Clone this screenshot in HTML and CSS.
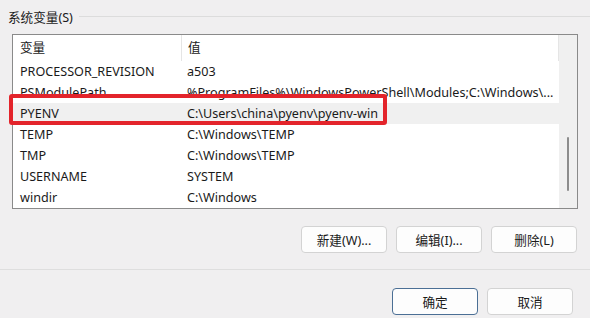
FILE: index.html
```html
<!DOCTYPE html>
<html lang="zh-CN">
<head>
    <meta charset="UTF-8">
    <title>系统变量</title>
    <link rel="stylesheet" href="styles.css">
</head>
<body>
    <div class="group-title">
        <span>系统变量(S)</span>
        <div class="group-line"></div>
    </div>

    <div class="panel">
        <div class="listbox">
            <div class="rows">
                <div class="row header">
                    <div class="col-name">变量</div>
                    <div class="col-value">值</div>
                </div>
                <div class="row">
                    <div class="col-name">PROCESSOR_REVISION</div>
                    <div class="col-value">a503</div>
                </div>
                <div class="row">
                    <div class="col-name">PSModulePath</div>
                    <div class="col-value">%ProgramFiles%\WindowsPowerShell\Modules;C:\Windows\...</div>
                </div>
                <div class="row selected">
                    <div class="col-name">PYENV</div>
                    <div class="col-value">C:\Users\china\pyenv\pyenv-win</div>
                </div>
                <div class="row">
                    <div class="col-name">TEMP</div>
                    <div class="col-value">C:\Windows\TEMP</div>
                </div>
                <div class="row">
                    <div class="col-name">TMP</div>
                    <div class="col-value">C:\Windows\TEMP</div>
                </div>
                <div class="row">
                    <div class="col-name">USERNAME</div>
                    <div class="col-value">SYSTEM</div>
                </div>
                <div class="row">
                    <div class="col-name">windir</div>
                    <div class="col-value">C:\Windows</div>
                </div>
            </div>
            <div class="scrollbar">
                <div class="thumb"></div>
            </div>
        </div>
        <!-- annotation box around the PYENV row -->
        <div class="highlight"></div>
    </div>

    <div class="actions">
        <button class="btn">新建(W)...</button>
        <button class="btn">编辑(I)...</button>
        <button class="btn">删除(L)</button>
    </div>

    <div class="separator"></div>

    <div class="footer">
        <button class="btn default">确定</button>
        <button class="btn">取消</button>
    </div>
</body>
</html>
```

FILE: styles.css
```css
body {
    margin: 0;
    background-color: #f0eff0;
    font-family: "Noto Sans", "Noto Sans CJK SC", sans-serif;
    font-size: 12.6px;
    color: #1a1a1a;
    width: 590px;
    height: 318px;
    overflow: hidden;
}
.group-title {
    display: flex;
    align-items: center;
    height: 18px;
    padding: 7px 0 0 8px;
}
.group-line {
    flex: 1;
    height: 1px;
    background-color: #dcdcdc;
    margin-left: 6px;
}
.panel {
    position: relative;
    margin: 9px 0 0 12px;
    width: 566px;
}
.listbox {
    display: flex;
    height: 173px;
    border: 1px solid #8a8a8a;
    background: white;
}
.rows {
    flex: 1;
}
.row {
    display: flex;
    height: 21px;
    align-items: center;
}
.row.header {
    height: 26px;
}
.row.header .col-name {
    border-right: 1px solid #e5e5e5;
    height: 26px;
    line-height: 26px;
}
.row.selected {
    background-color: #f0f0f0;
}
.col-name {
    width: 161px;
    padding-left: 7px;
    flex-shrink: 0;
}
.col-value {
    padding-left: 6px;
    white-space: nowrap;
    overflow: hidden;
}
.header .col-value {
    border-right: 1px solid #e5e5e5;
    flex: 1;
    height: 26px;
    line-height: 26px;
}
.scrollbar {
    width: 18px;
    background-color: #f0f0f0;
}
.thumb {
    width: 2px;
    height: 54px;
    margin: 102px 0 0 8px;
    background-color: #8c8c8c;
    border-radius: 1px;
}
.highlight {
    position: absolute;
    left: -3px;
    top: 60px;
    width: 370px;
    height: 23px;
    border: 4px solid #e3242b;
    border-radius: 3px;
}
.actions {
    display: flex;
    justify-content: flex-end;
    gap: 9px;
    padding-right: 13px;
    margin-top: 17px;
}
.btn {
    width: 86px;
    height: 27px;
    border: 1px solid #d3d3d3;
    border-radius: 4px;
    background-color: #fdfdfd;
    font-family: "Noto Sans", "Noto Sans CJK SC", sans-serif;
    font-size: 12.6px;
    color: #1a1a1a;
    padding: 0;
}
.separator {
    height: 1px;
    background-color: #dedede;
    margin-top: 16px;
}
.footer {
    display: flex;
    justify-content: flex-end;
    gap: 9px;
    padding-right: 17px;
    margin-top: 18px;
}
.btn.default {
    border-color: #4b6f95;
}
```
